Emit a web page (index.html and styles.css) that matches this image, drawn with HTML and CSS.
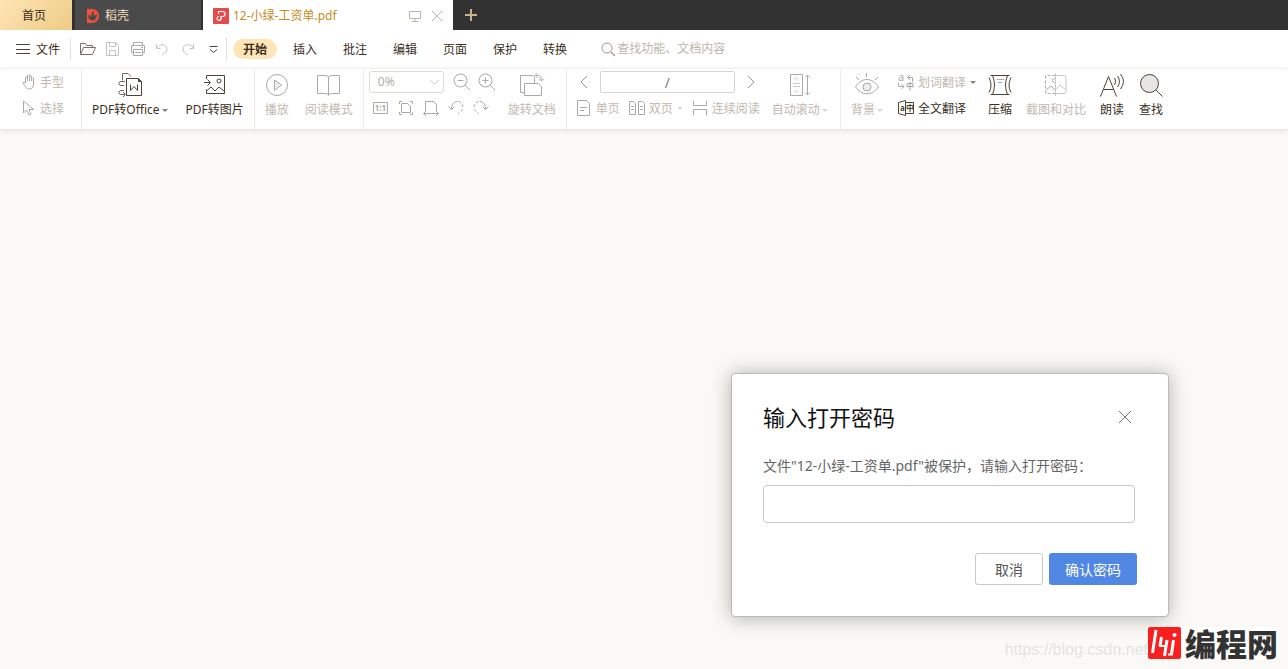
FILE: index.html
```html
<!DOCTYPE html>
<html lang="zh-CN">
<head>
<meta charset="utf-8">
<title>12-小绿-工资单.pdf</title>
<link rel="stylesheet" href="styles.css">
</head>
<body>
<nav class="tabs">
  <button class="tab tab-home">首页</button>
  <button class="tab tab-docer">
    <svg width="14" height="16" viewBox="0 0 14 16"><path fill="#f0503c" d="M1 1h5c4 0 7 3 7 7s-3 7-7 7H1z"/><path fill="#4a4a4a" d="M5.500 12.500C2.500 11 2 8.500 2.500 6.500 4 7 5 8 5.300 9.500 5 7 5.500 4.500 7.500 3c.7 2 .5 4-.2 6 .7-1.500 2-2.500 3.700-2.500 0 3-1.500 5-3.500 6z"/></svg>
    <span>稻壳</span>
  </button>
  <div class="tab tab-doc">
    <svg width="16" height="16" viewBox="0 0 16 16"><rect width="16" height="16" rx="1" fill="#e54b4b"/><path fill="none" stroke="#fff" stroke-width="1.200" d="M5.500 6V3.500h4a2.500 2.500 0 0 1 0 5H8v2a2 2 0 1 1-2-2"/></svg>
    <span class="tab-name">12-小绿-工资单.pdf</span>
    <button class="plain" aria-label="显示"><svg class="tan" width="12" height="12" viewBox="0 0 12 12"><path d="M.5 1.500h11v7H.5zM6 8.500v3M3 11.500h6"/></svg></button>
    <button class="plain" aria-label="关闭标签"><svg class="tan" width="12" height="12" viewBox="0 0 12 12"><path d="M1 1l10 10M11 1L1 11"/></svg></button>
  </div>
  <button class="plain new-tab" aria-label="新建"><svg width="12" height="12" viewBox="0 0 12 12"><path stroke="#c8b48c" stroke-width="2" d="M6 0v12M0 6h12"/></svg></button>
</nav>

<header class="menu">
  <button class="plain file"><svg width="14" height="10" viewBox="0 0 14 10"><path d="M0 .5h14M0 5.500h14M0 9.500h14"/></svg><span>文件</span></button>
  <div class="quick">
    <button class="plain" aria-label="打开"><svg width="16" height="14" viewBox="0 0 16 14"><path stroke="#7a6f62" d="M.5 12.500v-11h5l1 2h6v2M.5 12.500l3-7h12l-3 7z"/></svg></button>
    <button class="plain" aria-label="保存"><svg class="pale" width="16" height="14" viewBox="0 0 16 14"><path d="M1.500.5h9l3 3v10h-12zM4.500.5v4h6v-4M4.500 13.500v-5h6v5"/></svg></button>
    <button class="plain" aria-label="打印"><svg class="off" width="16" height="14" viewBox="0 0 16 14"><path d="M3.500 3.500v-3h9v3M3.500 10.500h-2v-7h13v7h-2M3.500 7.500h9v6h-9zM5 10.500h6M11 5.500h2"/></svg></button>
    <button class="plain" aria-label="撤销"><svg class="pale" width="16" height="14" viewBox="0 0 16 14"><path d="M1.500 2v4.500h4M2 6c3-5 10-4 10 1 0 3-3 5-5 6"/></svg></button>
    <button class="plain" aria-label="恢复"><svg class="pale" width="16" height="14" viewBox="0 0 16 14"><path d="M13.500 2v4.500h-4M13 6C10 1 3 2 3 7c0 3 3 5 5 6"/></svg></button>
    <button class="plain" aria-label="更多"><svg width="16" height="14" viewBox="0 0 16 14"><path d="M4.500 4.500h8M5 7.500l3.500 3 3.500-3"/></svg></button>
  </div>
  <nav class="sections">
    <button class="section active">开始</button>
    <button class="section">插入</button>
    <button class="section">批注</button>
    <button class="section">编辑</button>
    <button class="section">页面</button>
    <button class="section">保护</button>
    <button class="section">转换</button>
  </nav>
  <label class="search"><svg width="15" height="15" viewBox="0 0 15 15"><g stroke="#a39a8c"><circle cx="6" cy="6" r="5"/><path stroke-width="1.500" d="M10 10l4 4"/></g></svg><input type="text" placeholder="查找功能、文档内容" aria-label="查找功能"></label>
</header>

<section class="ribbon">
  <div class="group g-mode">
    <div class="rows">
      <button class="small off"><svg width="14" height="16" viewBox="0 0 14 16"><path d="M3.500 9V3.500c0-1 2-1 2 0V7 1.500c0-1 2-1 2 0V7 2.500c0-1 2-1 2 0V7 4.500c0-1 2-1 2 0V10c0 3-1 5-4 5s-4-2-6.500-6c0-1 1.500-1 2.500 0z"/></svg><span>手型</span></button>
      <button class="small off"><svg width="14" height="16" viewBox="0 0 14 16"><path d="M1.500 1v12l3-3 2.500 5 2-1-2-4.500h4.500z"/></svg><span>选择</span></button>
    </div>
  </div>
  <div class="group g-convert">
    <button class="big"><svg width="26" height="26" viewBox="0 0 26 26"><path stroke="#75695c" d="M5.500 8.500V1.500H11l3 3M8 9.500H4a2 2 0 0 0 0 4h3M7 18.500H4a2 2 0 0 0 0 4h4M6 20l2.500 2.500L6 25"/><path d="M9.500 6.500h12l3 3v14h-15zM13.500 12.500v6l3.500-4 3.500 4v-6"/><path fill="#4e4335" d="M21.500 6.500l3 3h-3z"/></svg><span class="label">PDF转Office<i class="caret"></i></span></button>
    <button class="big"><svg width="26" height="26" viewBox="0 0 26 26"><path d="M4.500 7V3.500h18v18h-18v-4M2 10.500h6M5.500 7.500l3 3-3 3M4.500 19l4.500-4 4 4 4-4 5 4"/><circle cx="17" cy="9" r="2"/></svg><span class="label">PDF转图片</span></button>
  </div>
  <div class="group g-view">
    <button class="big off"><svg width="26" height="26" viewBox="0 0 26 26"><circle cx="13" cy="13" r="10.500"/><path fill="#eee" d="M10.500 8v10.500l7-5.500z"/></svg><span class="label">播放</span></button>
    <button class="big off"><svg width="26" height="26" viewBox="0 0 26 26"><path d="M1.500 3.500h8q3 0 3 2 0-2 3-2h8v18h-8q-3 0-3 2 0-2-3-2h-8zM12.500 5v18"/></svg><span class="label">阅读模式</span></button>
  </div>
  <div class="group g-zoom">
    <div class="rows">
      <div class="line">
        <select class="zoom-level" aria-label="缩放" disabled><option>0%</option></select>
        <button class="plain" aria-label="缩小"><svg class="off" width="18" height="18" viewBox="0 0 18 18"><circle cx="7.500" cy="7.500" r="6.500"/><path d="M12 12l5 5M4.500 7.500h6"/></svg></button>
        <button class="plain" aria-label="放大"><svg class="off" width="18" height="18" viewBox="0 0 18 18"><circle cx="7.500" cy="7.500" r="6.500"/><path d="M12 12l5 5M4.500 7.500h6M7.500 4.500v6"/></svg></button>
      </div>
      <div class="line fits">
        <button class="plain" aria-label="实际大小"><svg class="off" width="16" height="16" viewBox="0 0 16 16"><path d="M.5 2.500h14v11H.5z"/><text x="7.500" y="11" text-anchor="middle">1:1</text></svg></button>
        <button class="plain" aria-label="适合页面"><svg class="off" width="16" height="16" viewBox="0 0 16 16"><path d="M3.500 3.500h6l3 3v6h-9zM1.500 4V1.500H4M12 1.500h2.500V4M1.500 12v2.500H4M12 14.500h2.500V12"/></svg></button>
        <button class="plain" aria-label="适合宽度"><svg class="off" width="16" height="16" viewBox="0 0 16 16"><path d="M2.500 10.500v-9h8l3 3v6M.5 13.500h15M3 11l-2.500 2.500L3 16M13 11l2.500 2.500L13 16"/></svg></button>
        <button class="plain" aria-label="向左旋转"><svg class="off" width="16" height="16" viewBox="0 0 16 16"><path d="M3.500 9.500C3 5 6 1.500 9 1.500M.5 6.500l3 3 3-3"/><path stroke-dasharray="3 2" d="M10 1.500c6 1 7 9 0 12"/></svg></button>
        <button class="plain" aria-label="向右旋转"><svg class="off" width="16" height="16" viewBox="0 0 16 16"><path d="M12.500 9.500C13 5 10 1.500 7 1.500M9.500 6.500l3 3 3-3"/><path stroke-dasharray="3 2" d="M6 1.500c-6 1-7 9 0 12"/></svg></button>
      </div>
    </div>
    <button class="big off"><svg width="26" height="26" viewBox="0 0 26 26"><path d="M5 20.500H1.500V3.500h12l2 2V11M5.500 11.500h14l3 3v9h-17zM16.500 3.500h3q3 0 3 5M18.500 1l-2.500 2.500L18.500 6M20 6.500l2.500 2.500L25 6.500"/></svg><span class="label">旋转文档</span></button>
  </div>
  <div class="group g-page">
    <div class="rows">
      <div class="line pager">
        <button class="plain" aria-label="上一页"><svg class="mid" width="8" height="14" viewBox="0 0 8 14"><path d="M7 1L1 7l6 6"/></svg></button>
        <input class="page-no" type="text" value="/" aria-label="页码">
        <button class="plain" aria-label="下一页"><svg class="mid" width="8" height="14" viewBox="0 0 8 14"><path d="M1 1l6 6-6 6"/></svg></button>
      </div>
      <div class="line layouts">
        <button class="small off"><svg width="15" height="16" viewBox="0 0 15 16"><path d="M.5.5h9l3 3v12H.5zM3 7.500h7M3 10.500h4"/></svg><span>单页</span></button>
        <button class="small off"><svg width="16" height="16" viewBox="0 0 16 16"><path d="M.5 1.500h4l2 2v11h-6zM9.500 1.500h4l2 2v11h-6zM2 6.500h3M2 9.500h3M11 6.500h3M11 9.500h3"/></svg><span>双页</span><i class="caret"></i></button>
        <button class="small off"><svg width="16" height="16" viewBox="0 0 16 16"><path d="M1.500.5v5h13v-5M1.500 15.500v-6h13v6"/></svg><span>连续阅读</span></button>
      </div>
    </div>
    <button class="big off"><svg width="26" height="26" viewBox="0 0 26 26"><path d="M3.500 2.500h12v21h-12zM20.500 3v20M18 5.500L20.500 3 23 5.500M18 20.500l2.500 2.500 2.500-2.500"/><path stroke="#c8c8c8" d="M6 11.500h7M6 14.500h7M7.500 7.500l2-2 2 2M7.500 18.500l2 2 2-2"/></svg><span class="label">自动滚动<i class="caret"></i></span></button>
  </div>
  <div class="group g-tools">
    <button class="big off"><svg width="26" height="26" viewBox="0 0 26 26"><path d="M1.500 15C8 5 18 5 24.500 15 18 24 8 24 1.500 15zM12.500 1v4M2 5l3 3M24 5l-3 3"/><circle fill="#eee" cx="13" cy="15" r="4"/></svg><span class="label">背景<i class="caret"></i></span></button>
    <div class="rows translate">
      <button class="small off dark-caret"><svg width="16" height="16" viewBox="0 0 16 16"><text class="letter" x="0" y="7">a</text><text x="8" y="15">中</text><path d="M9.500 3.500h5V8M12 1L9.500 3.500 12 6M.5 9v3.500H6M3.500 10L6 12.500 3.500 15"/></svg><span>划词翻译</span><i class="caret"></i></button>
      <button class="small"><svg width="16" height="16" viewBox="0 0 16 16"><path d="M7.500.5l-7 2v11l7 2zM7.500 2.500h8v11h-8"/><text x="2" y="11">a</text><text x="8" y="11">中</text></svg><span>全文翻译</span></button>
    </div>
    <button class="big"><svg width="26" height="26" viewBox="0 0 26 26"><path d="M3.500 3.500h19M3.500 22.500h19M5.500 3.500q4 9.500 0 19M20.500 3.500q-4 9.500 0 19M2 5.500q4 7.500 0 15M24 5.500q-4 7.500 0 15"/><path stroke="#aaa" d="M10 7.500h7M11 10.500h4"/></svg><span class="label">压缩</span></button>
    <button class="big off"><svg width="26" height="26" viewBox="0 0 26 26"><path stroke-dasharray="3 2" d="M12.500 3.500h-10v18h10"/><path stroke="#c8c8c8" d="M13 3.500h8q2 0 2 2v14q0 2-2 2h-8M12.500 1v23M13 17l4-4 6 5"/><path d="M11.500 6.500a2 2 0 1 0 0 4M3 18l5-4 4 4"/></svg><span class="label">截图和对比</span></button>
    <button class="big"><svg width="26" height="26" viewBox="0 0 26 26"><path d="M1.500 24.500l8-20 8 20M4.500 17.500h10M15.500 6q2.500 3.500 0 7M18.500 4q4 5.500 0 11M21.500 2q6 7.500 0 15"/></svg><span class="label">朗读</span></button>
    <button class="big"><svg width="26" height="26" viewBox="0 0 26 26"><circle fill="#e6e6e6" cx="11.500" cy="11.500" r="9"/><path d="M18 18l6.500 6.500"/></svg><span class="label">查找</span></button>
  </div>
</section>

<main class="workspace">
  <form class="dialog" role="dialog" aria-labelledby="dlg-title">
    <div class="dialog-head">
      <h1 id="dlg-title">输入打开密码</h1>
      <button type="button" class="plain" aria-label="关闭"><svg width="14" height="14" viewBox="0 0 14 14"><path stroke="#777" d="M1 1l12 12M13 1L1 13"/></svg></button>
    </div>
    <label class="message" for="password">文件"12-小绿-工资单.pdf"被保护，请输入打开密码：</label>
    <input class="password" id="password" type="password">
    <div class="actions">
      <button type="button" class="cancel">取消</button>
      <button type="button" class="confirm">确认密码</button>
    </div>
  </form>
  <footer class="credit">
    <span class="source">https://blog.csdn.net</span>
    <span class="brand">
      <svg width="33" height="32" viewBox="0 0 33 32"><rect width="33" height="32" rx="2" fill="#fa1e1e" stroke="none"/><path stroke="#fff" stroke-width="3" d="M8 3L4.500 26M13.500 10l-1.500 9M19 13l-2.500 16M25.500 13l-2 14"/><path stroke="#fff" stroke-width="2" d="M11 19h7M20 27.500h5"/><circle cx="26.500" cy="8" r="2" fill="#fff" stroke="none"/></svg>
      <strong>编程网</strong>
    </span>
  </footer>
</main>
</body>
</html>
```
FILE: styles.css
```css
* { box-sizing: border-box; }
body {
  margin: 0;
  min-height: 100vh;
  display: flex;
  flex-direction: column;
  background: #faf9f5;
  color: #3a2f22;
  font: 12px/16px "Noto Sans", "Noto Sans CJK SC", sans-serif;
}
button, input, select { font: inherit; color: inherit; margin: 0; }
button { border: 0; padding: 0; background: none; white-space: nowrap; }
svg { display: block; flex: none; overflow: visible; fill: none; stroke: #4e4335; }
svg text { font: 700 8px "Noto Sans", "Noto Sans CJK SC", sans-serif; stroke: none; fill: #4e4335; }
svg .letter { font-size: 11px; font-weight: 400; }
.off { color: #c0b9b0; }
svg.off, .off svg { stroke: #a9a9a9; }
.off text { fill: #a9a9a9; }
svg.pale { stroke: #c4c4c4; }
svg.mid { stroke: #999; }
svg.tan { stroke: #bcb4a6; }
.plain { display: flex; align-items: center; }

.tabs { display: flex; height: 30px; background: #323232; }
.tab { display: flex; align-items: center; padding-top: 2px; }
.tab-home { width: 72px; justify-content: center; padding-right: 4px; background: linear-gradient(135deg, #ffe5b4, #edcb86); }
.tab-docer { width: 126px; margin: 0 2px 0 3px; padding-left: 11px; gap: 5px; background: #4a4a4a; color: #f3dcc0; }
.tab-docer svg, .tab-doc > svg { stroke: none; }
.tab-doc { width: 250px; padding: 2px 10px 0; gap: 10px; background: #fff; color: #c58c1c; }
.tab-name { flex: 1; margin-left: -6px; }
.new-tab { padding: 0 12px; }

.menu { display: flex; align-items: center; height: 38px; background: #fff; }
.menu span { padding-top: 1px; }
.file { gap: 6px; padding: 0 10px 0 16px; height: 24px; border-right: 1px solid #e8e2dc; }
.quick { display: flex; align-items: center; gap: 9px; height: 24px; padding: 0 5px 0 9px; border-right: 1px solid #e8e2dc; }
.sections { display: flex; gap: 6px; margin-left: 6px; }
.section { height: 20px; padding: 2px 10px 0; border-radius: 10px; }
.active { background: #fde5b8; font-weight: 700; }
.search { display: flex; align-items: center; gap: 1px; margin-left: 24px; }
.search input { width: 160px; padding: 0; border: 0; outline: 0; background: none; }
.search input::placeholder { color: #bdb5a8; opacity: 1; }

.ribbon { display: flex; height: 62px; background: #fff; border-top: 1px solid #f3f1ef; border-bottom: 1px solid #e8e6e2; box-shadow: 0 1px 4px #e8e6e2; }
.group { display: flex; align-items: flex-start; border-right: 1px solid #f0eae6; }
.g-mode { padding: 0 17px 0 22px; }
.g-convert { padding: 0 10px; gap: 18px; }
.g-view { padding: 0 10px 0 9px; gap: 15px; }
.g-zoom { padding: 0 10px 0 5px; gap: 12px; }
.g-page { padding: 0 12px 0 10px; gap: 12px; }
.g-tools { padding: 0 10px; gap: 13px; border-right: 0; }
.rows { display: grid; gap: 4px; padding-top: 2px; }
.translate { margin: 0 -2px 0 2px; }
.line { display: flex; align-items: center; height: 22px; }
.small { display: flex; align-items: center; gap: 4px; height: 22px; }
.small span { padding-top: 2px; }
.big { display: flex; flex-direction: column; align-items: center; gap: 4px; padding-top: 3px; }
.label { display: flex; align-items: center; gap: 2px; }
.caret { border: 3px solid transparent; border-top-color: #8c8071; border-bottom: 0; }
.off .caret { border-top-color: #dcd8d3; }
.dark-caret .caret { border-top-color: #8c8071; }
.zoom-level { width: 75px; height: 22px; margin-right: 9px; padding: 0 8px; appearance: none; border: 1px solid #dcdcd8; border-radius: 3px; opacity: 1; color: #b5aea5;
  background: linear-gradient(45deg, transparent 46%, #ccc 46% 56%, transparent 56%) 60px 8px / 5px 5px no-repeat, linear-gradient(-45deg, transparent 46%, #ccc 46% 56%, transparent 56%) 64px 8px / 5px 5px no-repeat, #fff; }
.zoom-level + .plain { margin-right: 7px; }
.fits { gap: 9px; padding-left: 4px; }
.pager { gap: 12px; padding-left: 3px; }
.page-no { width: 135px; height: 22px; padding: 0; border: 1px solid #d8d5d0; border-radius: 2px; text-align: center; font-size: 14px; color: #777; }
.layouts { gap: 9px; }

.workspace { flex: 1; position: relative; }
.dialog { position: absolute; right: 119px; bottom: 52px; width: 438px; padding: 28px 31px 31px; background: #fff; border: 1px solid #b9b9b7; border-radius: 4px; box-shadow: 0 1px 20px #0000004d; }
.dialog-head { display: flex; align-items: center; justify-content: space-between; padding-right: 5px; }
h1 { margin: 0; font-size: 22px; line-height: 30px; font-weight: 400; color: #111; }
.message { display: block; margin: 23px 0 8px; font-size: 14px; line-height: 22px; color: #666; }
.password { display: block; width: calc(100% - 2px); height: 38px; padding: 0 10px; border: 1px solid #c8c8c8; border-radius: 4px; background: #fff; }
.actions { display: flex; justify-content: flex-end; gap: 6px; margin-top: 30px; font-size: 14px; }
.cancel, .confirm { height: 32px; padding-top: 2px; border-radius: 3px; }
.cancel { width: 68px; border: 1px solid #c8c8c8; color: #555; }
.confirm { width: 88px; background: #5087e5; color: #fff; }

.credit { position: absolute; right: 10px; bottom: 10px; display: flex; align-items: flex-end; }
.source { font: 16px/18px "Liberation Sans", sans-serif; color: #e3e2df; text-shadow: 1px 1px #fff; }
.brand { display: flex; align-items: center; gap: 4px; background: #fff; }
.brand strong { font: 900 31px/32px "Noto Sans CJK SC", sans-serif; color: #333; }
```
